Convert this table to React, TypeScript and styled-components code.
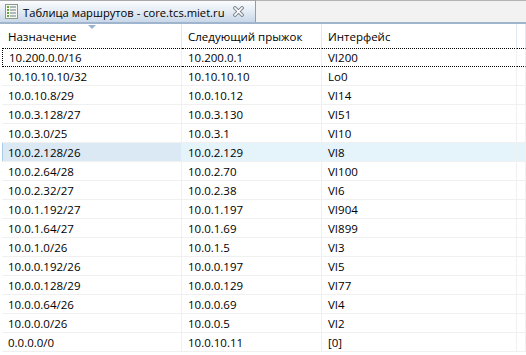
import React from 'react';
import styled, { createGlobalStyle } from 'styled-components';

const GlobalStyle = createGlobalStyle`
  html, body {
    margin: 0;
    padding: 0;
    background: #ffffff;
  }
  body {
    font-family: "Open Sans", "Noto Sans", "Liberation Sans", sans-serif;
    font-size: 11.5px;
    color: #000000;
  }
`;

const Frame = styled.div`
  width: 526px;
  height: 355px;
  overflow: hidden;
  display: flex;
  flex-direction: column;
  background: #ffffff;
`;

const TabBar = styled.div`
  display: flex;
  height: 24px;
  background: #f2f2f2;
  border-top: 1px solid #b4b4b4;
  border-bottom: 2px solid #9fb5cd;
  box-sizing: border-box;
  flex-shrink: 0;
`;

const Tab = styled.div`
  display: flex;
  align-items: center;
  width: 256px;
  flex-shrink: 0;
  padding: 0 0 0 5px;
  box-sizing: border-box;
  margin-top: -1px;
  background: linear-gradient(#fbfcfe 0%, #e6edf5 45%, #c9d7e8 100%);
  border-top: 1px solid #a8a8a8;
  border-right: 1px solid #9a9a9a;
  white-space: nowrap;
  overflow: hidden;
`;

const TabTitle = styled.span`
  font-size: 11.2px;
  margin: 1px 8px 0 5px;
  flex-shrink: 0;
`;

const Grid = styled.div`
  display: grid;
  grid-template-columns: 180px 140px 195px 1fr;
  margin-left: 2px;
`;

const HeadCell = styled.div`
  height: 24px;
  display: flex;
  align-items: center;
  padding-left: 6px;
  position: relative;
  border-right: 1px solid #e3e8ee;
  box-sizing: border-box;
`;

const SortMark = styled.span`
  position: absolute;
  top: 1px;
  left: 86px;
  width: 0;
  height: 0;
  border-left: 4px solid transparent;
  border-right: 4px solid transparent;
  border-top: 4px solid #97b3d0;
`;

const Row = styled.div<{ $selected?: boolean; $focused?: boolean }>`
  display: contents;
  & > div {
    background: ${(p) => (p.$selected ? '#e5f3fb' : 'transparent')};
    ${(p) => (p.$focused ? 'border-top: 1px dotted #000; border-bottom: 1px dotted #000;' : '')}
  }
  & > div:first-child {
    background: ${(p) => (p.$selected ? '#dae9f4' : 'transparent')};
    ${(p) => (p.$focused ? 'border-left: 1px dotted #000;' : '')}
    ${(p) => (p.$selected ? 'box-shadow: inset 1px 0 0 #a9cbe6;' : '')}
  }
`;

const Cell = styled.div`
  height: 19px;
  display: flex;
  align-items: center;
  padding-left: 6px;
  border-right: 1px solid #f0f0f0;
  border-bottom: 1px solid #f0f0f0;
  box-sizing: border-box;
  white-space: nowrap;
`;

const routes: [string, string, string][] = [
  ['10.200.0.0/16', '10.200.0.1', 'VI200'],
  ['10.10.10.10/32', '10.10.10.10', 'Lo0'],
  ['10.0.10.8/29', '10.0.10.12', 'VI14'],
  ['10.0.3.128/27', '10.0.3.130', 'VI51'],
  ['10.0.3.0/25', '10.0.3.1', 'VI10'],
  ['10.0.2.128/26', '10.0.2.129', 'VI8'],
  ['10.0.2.64/28', '10.0.2.70', 'VI100'],
  ['10.0.2.32/27', '10.0.2.38', 'VI6'],
  ['10.0.1.192/27', '10.0.1.197', 'VI904'],
  ['10.0.1.64/27', '10.0.1.69', 'VI899'],
  ['10.0.1.0/26', '10.0.1.5', 'VI3'],
  ['10.0.0.192/26', '10.0.0.197', 'VI5'],
  ['10.0.0.128/29', '10.0.0.129', 'VI77'],
  ['10.0.0.64/26', '10.0.0.69', 'VI4'],
  ['10.0.0.0/26', '10.0.0.5', 'VI2'],
  ['0.0.0.0/0', '10.0.10.11', '[0]'],
];

const TableIcon = () => (
  <svg width="13" height="15" viewBox="0 0 13 15">
    <rect x="0.5" y="0.5" width="12" height="14" fill="#f7f9f3" stroke="#8a9a86" />
    {[3, 6, 9, 12].map((y) => (
      <g key={y}>
        <rect x="2" y={y - 1} width="2" height="2" fill="#5fa83a" />
        <rect x="5" y={y - 0.5} width="6" height="1" fill="#6c7a88" />
      </g>
    ))}
  </svg>
);

const CloseIcon = () => (
  <svg width="11" height="11" viewBox="0 0 11 11">
    <path
      d="M2 2 L9 9 M9 2 L2 9"
      stroke="#7d8690"
      strokeWidth="3.6"
      strokeLinecap="square"
      fill="none"
    />
    <path
      d="M2 2 L9 9 M9 2 L2 9"
      stroke="#ffffff"
      strokeWidth="1.6"
      strokeLinecap="square"
      fill="none"
    />
  </svg>
);

const App = () => {
  return (
    <>
      <GlobalStyle />
      <Frame>
        <TabBar>
          <Tab>
            <TableIcon />
            <TabTitle>Таблица маршрутов - core.tcs.miet.ru</TabTitle>
            <CloseIcon />
          </Tab>
        </TabBar>
        <Grid>
          <HeadCell>
            Назначение
            <SortMark />
          </HeadCell>
          <HeadCell>Следующий прыжок</HeadCell>
          <HeadCell>Интерфейс</HeadCell>
          <HeadCell />
          {routes.map((r, idx) => (
            <Row key={idx} $focused={idx === 0} $selected={idx === 5}>
              <Cell>{r[0]}</Cell>
              <Cell>{r[1]}</Cell>
              <Cell>{r[2]}</Cell>
              <Cell />
            </Row>
          ))}
        </Grid>
      </Frame>
    </>
  );
};

export default App;
